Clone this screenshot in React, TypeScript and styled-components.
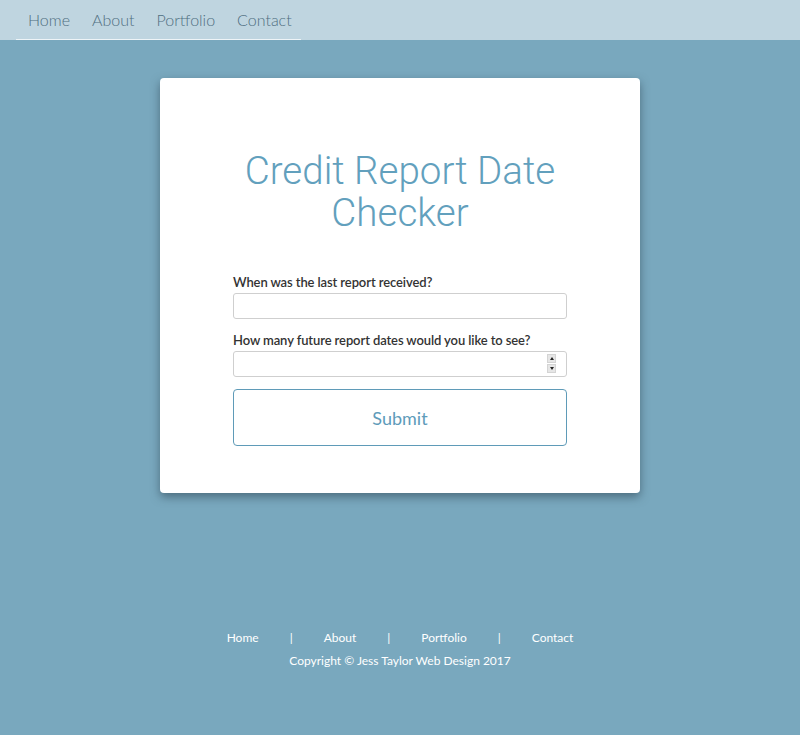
import React from "react";
import styled, { createGlobalStyle } from "styled-components";

const Global = createGlobalStyle`
  html, body { margin: 0; padding: 0; }
  body {
    background: #79a8be;
    font-family: "Lato", "Open Sans", sans-serif;
    min-height: 735px;
  }
`;

const Page = styled.div`
  display: flex;
  flex-direction: column;
  align-items: stretch;
  min-height: 735px;
`;

const NavBar = styled.nav`
  height: 40px;
  background: #bfd5e0;
  padding: 0 16px;
  display: flex;
`;

const NavList = styled.ul`
  list-style: none;
  margin: 0;
  padding: 0 0 0 12px;
  width: 273px;
  display: flex;
  gap: 22px;
  border-bottom: 1px solid #eef4f7;
  height: 39px;
  align-items: center;
`;

const NavLink = styled.li`
  font-family: "Lato", sans-serif;
  font-weight: 300;
  font-size: 16px;
  color: #4f6f80;
`;

const Main = styled.main`
  display: flex;
  justify-content: center;
  padding-top: 38px;
`;

const Card = styled.section`
  width: 480px;
  height: 415px;
  box-sizing: border-box;
  background: #fff;
  border-radius: 4px;
  box-shadow: 0 4px 10px rgba(40, 60, 75, 0.55);
  padding: 72px 73px 0;
  display: flex;
  flex-direction: column;
`;

const Title = styled.h1`
  margin: 0 0 40px;
  font-family: "Roboto", sans-serif;
  font-weight: 300;
  font-size: 38.5px;
  line-height: 42px;
  color: #62a0bd;
  text-align: center;
`;

const Label = styled.label`
  display: block;
  font-family: "Lato", sans-serif;
  font-size: 13px;
  line-height: 16px;
  font-weight: 600;
  color: #333;
  margin-bottom: 3px;
  letter-spacing: -0.1px;
`;

const Field = styled.div<{ $gap: number }>`
  margin-bottom: ${(p) => p.$gap}px;
`;

const InputWrap = styled.div`
  position: relative;
  width: 334px;
`;

const Input = styled.input`
  display: block;
  box-sizing: border-box;
  width: 334px;
  height: 26px;
  border: 1px solid #cfcfcf;
  border-radius: 3px;
  background: #fff;
  font-size: 13px;
  padding: 0 6px;
  outline: none;
  -moz-appearance: textfield;
  &::-webkit-inner-spin-button,
  &::-webkit-outer-spin-button {
    -webkit-appearance: none;
    margin: 0;
  }
`;

const Spinner = styled.div`
  position: absolute;
  right: 11px;
  top: 3px;
  width: 9px;
  display: flex;
  flex-direction: column;
  gap: 1px;
  pointer-events: none;
`;

const SpinHalf = styled.div<{ $up?: boolean }>`
  height: 9px;
  background: #e6e6e6;
  border: 1px solid #d4d4d4;
  box-sizing: border-box;
  display: flex;
  align-items: center;
  justify-content: center;
  &::after {
    content: "";
    width: 0;
    height: 0;
    border-left: 2.5px solid transparent;
    border-right: 2.5px solid transparent;
    ${(p) =>
      p.$up
        ? "border-bottom: 3px solid #222;"
        : "border-top: 3px solid #222;"}
  }
`;

const Button = styled.button`
  display: block;
  box-sizing: border-box;
  width: 334px;
  height: 57px;
  background: #fff;
  border: 1px solid #5f9bb8;
  border-radius: 4px;
  font-family: "Lato", sans-serif;
  font-weight: 400;
  font-size: 18px;
  color: #5e9bba;
  cursor: pointer;
`;

const Footer = styled.footer`
  margin-top: 136px;
  display: flex;
  flex-direction: column;
  align-items: center;
  color: #fff;
  font-family: "Lato", sans-serif;
  font-size: 12px;
`;

const FooterLinks = styled.div`
  display: flex;
  align-items: center;
  gap: 31px;
  height: 16px;
`;

const FooterLink = styled.span``;

const Sep = styled.span``;

const Copyright = styled.div`
  margin-top: 8px;
`;

export default function App() {
  const links = ["Home", "About", "Portfolio", "Contact"];
  return (
    <Page>
      <Global />
      <NavBar>
        <NavList>
          {links.map((l) => (
            <NavLink key={l}>{l}</NavLink>
          ))}
        </NavList>
      </NavBar>
      <Main>
        <Card>
          <Title>
            Credit Report Date
            <br />
            Checker
          </Title>
          <Field $gap={13}>
            <Label>When was the last report received?</Label>
            <Input type="text" />
          </Field>
          <Field $gap={12}>
            <Label>How many future report dates would you like to see?</Label>
            <InputWrap>
              <Input type="number" />
              <Spinner>
                <SpinHalf $up />
                <SpinHalf />
              </Spinner>
            </InputWrap>
          </Field>
          <Button>Submit</Button>
        </Card>
      </Main>
      <Footer>
        <FooterLinks>
          {links.map((l, i) => (
            <React.Fragment key={l}>
              {i > 0 && <Sep>|</Sep>}
              <FooterLink>{l}</FooterLink>
            </React.Fragment>
          ))}
        </FooterLinks>
        <Copyright>Copyright © Jess Taylor Web Design 2017</Copyright>
      </Footer>
    </Page>
  );
}
